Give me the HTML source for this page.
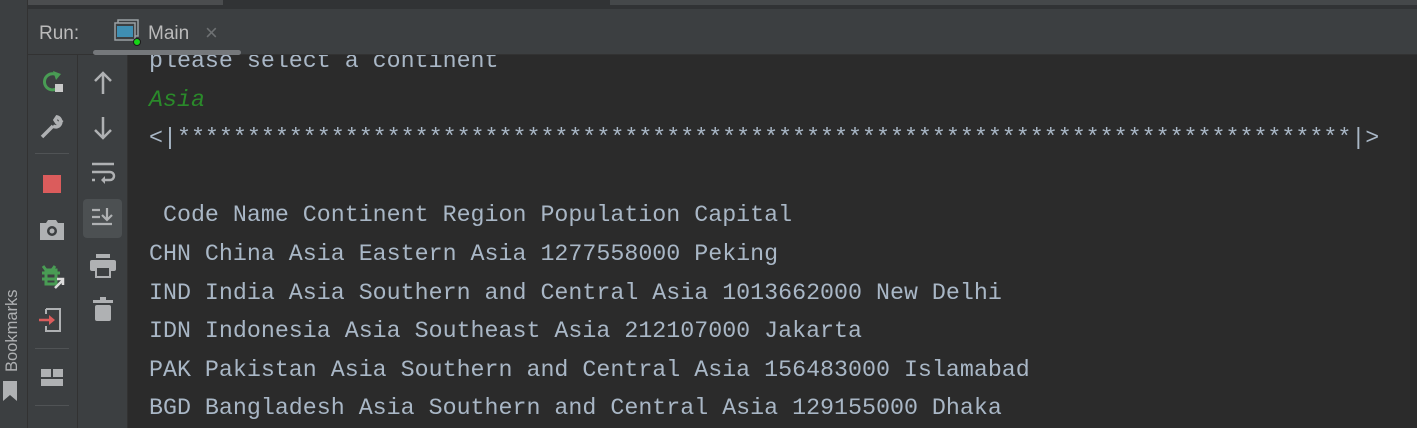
<!DOCTYPE html>
<html><head><meta charset="utf-8"><style>
*{margin:0;padding:0;box-sizing:border-box}
body{width:1417px;height:428px;overflow:hidden;background:#2b2b2b;position:relative;font-family:"Liberation Sans",sans-serif}
.abs{position:absolute}
.mono{font-family:"Liberation Mono",monospace;font-size:23.3px;color:#a9b7c6;white-space:pre;line-height:38.6px}
</style></head><body>
<div class="abs" style="left:0;top:0;width:1417px;height:9px;background:#313335"></div>
<div class="abs" style="left:28px;top:0;width:195px;height:5px;background:#4b4d4f"></div>
<div class="abs" style="left:610px;top:0;width:807px;height:5px;background:#45484a"></div>
<div class="abs" style="left:0;top:9px;width:1417px;height:45px;background:#3c3f41"></div>
<div class="abs" style="left:0;top:54px;width:1417px;height:1px;background:#323232"></div>
<div class="abs" style="left:0;top:0;width:27px;height:428px;background:#3c3f41"></div>
<div class="abs" style="left:27px;top:0;width:1px;height:428px;background:#323232"></div>
<div class="abs" style="left:28px;top:55px;width:49px;height:373px;background:#3c3f41"></div>
<div class="abs" style="left:77px;top:55px;width:1px;height:373px;background:#323232"></div>
<div class="abs" style="left:78px;top:55px;width:49px;height:373px;background:#3c3f41"></div>
<div class="abs" style="left:127px;top:55px;width:1px;height:373px;background:#323232"></div>
<div class="abs" style="left:39px;top:23px;font-size:19px;color:#bbbbbb">Run:</div>
<svg class="abs" style="left:114px;top:18px" width="28" height="28" viewBox="0 0 28 28">
<rect x="4" y="2" width="20" height="16" fill="none" stroke="#9aa0a4" stroke-width="1.5"/>
<rect x="1" y="5" width="20" height="17" fill="#3c3f41" stroke="#9aa0a4" stroke-width="1.5"/>
<rect x="3" y="8" width="16" height="11" fill="#3f8fb3"/>
<circle cx="23" cy="24" r="3.5" fill="#16d516" stroke="#1a1a1a" stroke-width="1"/></svg>
<div class="abs" style="left:148px;top:23px;font-size:19px;color:#bbbbbb">Main</div>
<div class="abs" style="left:205px;top:20px;font-size:22px;color:#6e7173">×</div>
<div class="abs" style="left:93px;top:50px;width:148px;height:5px;border-radius:3px;background:#75787b"></div>
<svg class="abs" style="left:38px;top:68px" width="28" height="28" viewBox="0 0 28 28"><path d="M20 8a8 8 0 1 0 -2 13" fill="none" stroke="#499c54" stroke-width="3"/><path d="M15 3l8 3-5 6z" fill="#499c54"/><rect x="17" y="16" width="8" height="8" fill="#c9c9c9"/></svg>
<svg class="abs" style="left:38px;top:113px" width="28" height="28" viewBox="0 0 28 28"><path d="M4 24l11-11M15 13a5 5 0 1 0 4-9l-2 3 2 3 3 0 2-3" fill="none" stroke="#afb1b3" stroke-width="3.5"/></svg>
<div class="abs" style="left:35px;top:153px;width:34px;height:1px;background:#505355"></div>
<div class="abs" style="left:43px;top:175px;width:18px;height:18px;background:#db5c5c"></div>
<svg class="abs" style="left:38px;top:218px" width="28" height="24" viewBox="0 0 28 24"><path d="M2 5h6l2-3h8l2 3h6v17H2z" fill="#afb1b3"/><circle cx="14" cy="13" r="5" fill="#3c3f41"/><circle cx="14" cy="13" r="2.5" fill="#afb1b3"/></svg>
<svg class="abs" style="left:38px;top:262px" width="28" height="28" viewBox="0 0 28 28"><path d="M5 4l3 4h6l3-4M4 11h18M4 17h14M8 8h10v14H8z" fill="none" stroke="#499c54" stroke-width="3"/><path d="M17 26l8-8M19 17h6v6" fill="none" stroke="#dcdcdc" stroke-width="2.5"/></svg>
<svg class="abs" style="left:38px;top:306px" width="28" height="28" viewBox="0 0 28 28"><path d="M8 3h14v22H8v-5M8 8V3" fill="none" stroke="#afb1b3" stroke-width="2"/><path d="M1 14h13" stroke="#db5c5c" stroke-width="2.5"/><path d="M11 9l6 5-6 5z" fill="#db5c5c"/></svg>
<div class="abs" style="left:35px;top:348px;width:34px;height:1px;background:#505355"></div>
<svg class="abs" style="left:40px;top:368px" width="24" height="20" viewBox="0 0 24 20"><rect x="1" y="1" width="10" height="8" fill="#afb1b3"/><rect x="13" y="1" width="10" height="8" fill="#afb1b3"/><rect x="1" y="11" width="22" height="7" fill="#afb1b3"/></svg>
<div class="abs" style="left:35px;top:405px;width:34px;height:1px;background:#505355"></div>
<div class="abs" style="left:2px;top:372px;transform-origin:0 0;transform:rotate(-90deg);font-size:16.5px;color:#afb1b3;white-space:nowrap;line-height:20px">Bookmarks</div>
<svg class="abs" style="left:1px;top:380px" width="18" height="22" viewBox="0 0 18 22"><path d="M2 1h14v20l-7-6-7 6z" fill="#afb1b3"/></svg>
<svg class="abs" style="left:90px;top:70px" width="26" height="26" viewBox="0 0 26 26"><path d="M13 24V3M5 11l8-8 8 8" fill="none" stroke="#afb1b3" stroke-width="2.5"/></svg>
<svg class="abs" style="left:90px;top:115px" width="26" height="26" viewBox="0 0 26 26"><path d="M13 2v21M5 15l8 8 8-8" fill="none" stroke="#afb1b3" stroke-width="2.5"/></svg>
<svg class="abs" style="left:90px;top:161px" width="26" height="26" viewBox="0 0 26 26"><path d="M2 3h22M2 11h18a4 4 0 0 1 0 8h-7M2 19h3" fill="none" stroke="#afb1b3" stroke-width="2.5"/><path d="M15 15l-4 4 4 4z" fill="#afb1b3"/></svg>
<div class="abs" style="left:83px;top:199px;width:39px;height:39px;border-radius:4px;background:#4c5052"></div>
<svg class="abs" style="left:90px;top:205px" width="26" height="26" viewBox="0 0 26 26"><path d="M2 5h8M2 12h8M2 19h20M17 3v12M12 10l5 5 5-5" fill="none" stroke="#afb1b3" stroke-width="2.2"/></svg>
<svg class="abs" style="left:89px;top:253px" width="28" height="26" viewBox="0 0 28 26"><rect x="7" y="1" width="14" height="4" fill="#afb1b3"/><rect x="1" y="7" width="26" height="11" rx="2" fill="#afb1b3"/><rect x="7" y="14" width="14" height="10" fill="#3c3f41" stroke="#afb1b3" stroke-width="2"/></svg>
<svg class="abs" style="left:92px;top:297px" width="22" height="26" viewBox="0 0 22 26"><rect x="1" y="3" width="20" height="3" fill="#afb1b3"/><rect x="8" y="0" width="6" height="3" fill="#afb1b3"/><rect x="3" y="8" width="16" height="16" rx="2" fill="#afb1b3"/></svg>
<div class="abs" style="left:128px;top:55px;width:1289px;height:373px;overflow:hidden">
<div class="mono" style="position:absolute;left:21px;top:-13px">please select a continent
<span style="color:#2a8a2a;font-style:italic">Asia</span>
&lt;|************************************************************************************|&gt;

 Code Name Continent Region Population Capital
CHN China Asia Eastern Asia 1277558000 Peking
IND India Asia Southern and Central Asia 1013662000 New Delhi
IDN Indonesia Asia Southeast Asia 212107000 Jakarta
PAK Pakistan Asia Southern and Central Asia 156483000 Islamabad
BGD Bangladesh Asia Southern and Central Asia 129155000 Dhaka</div>
</div>
</body></html>
